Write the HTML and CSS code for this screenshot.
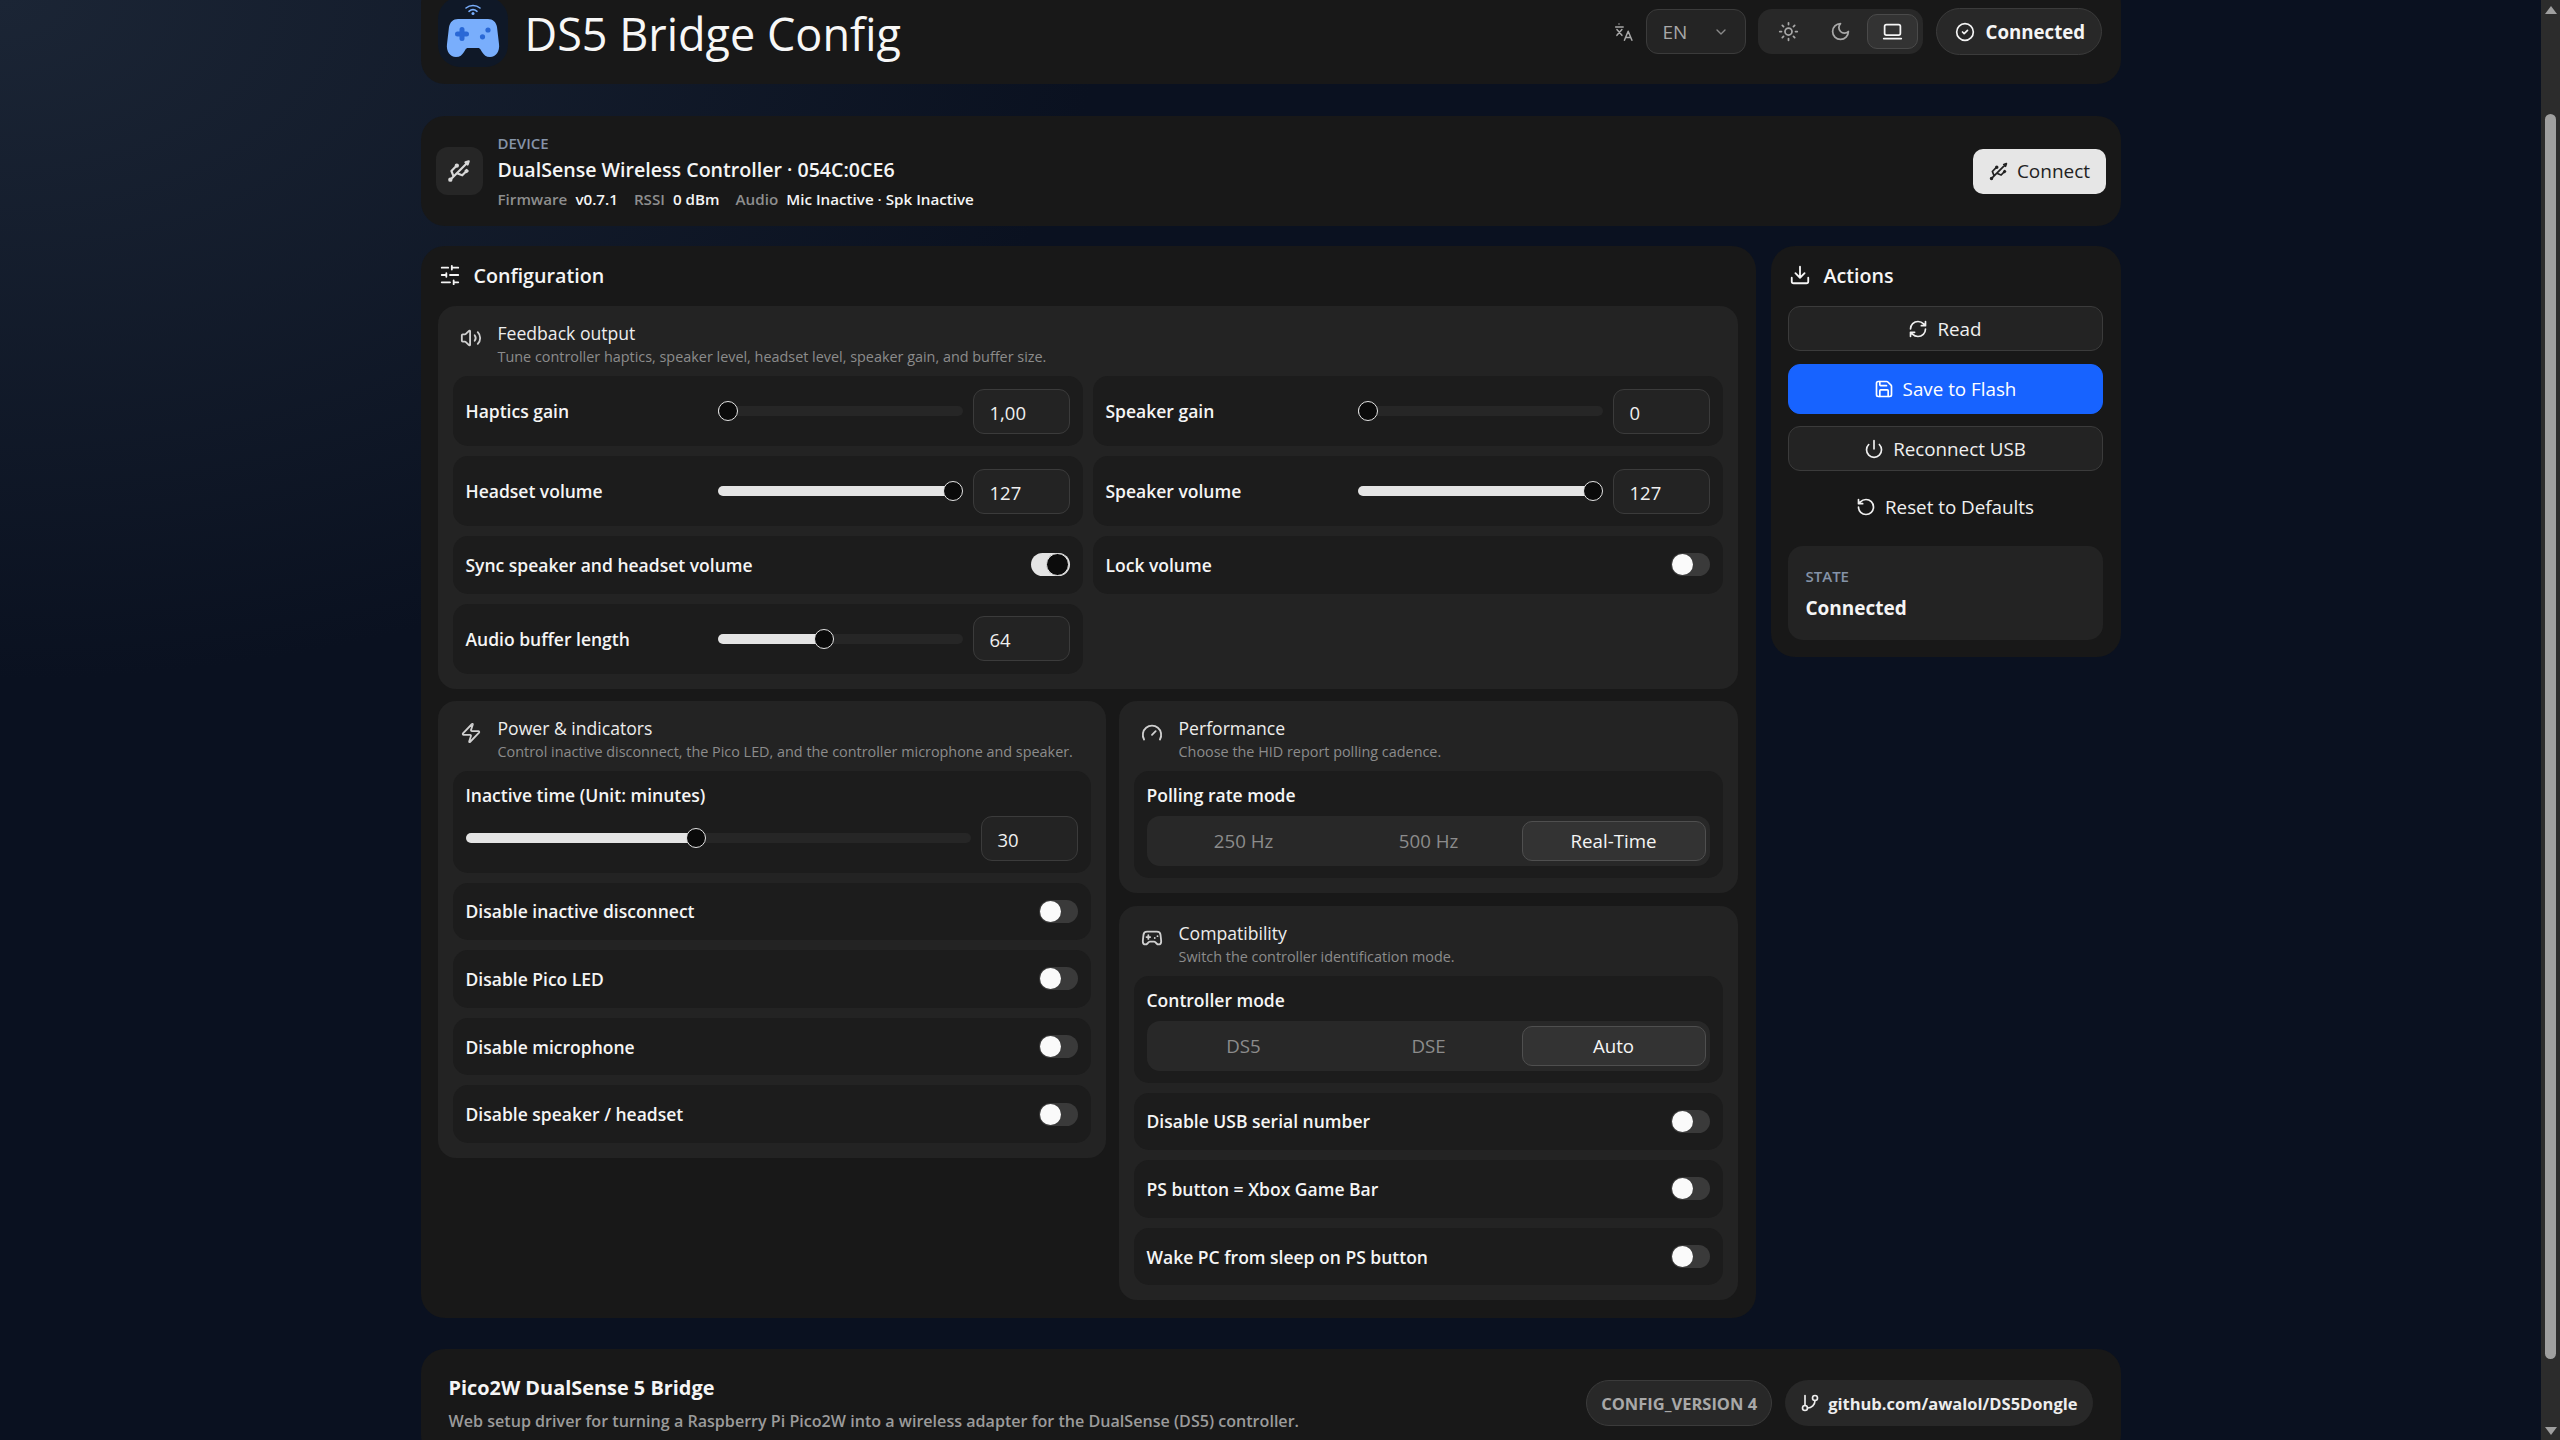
FILE: index.html
```html
<!DOCTYPE html>
<html lang="en">
<head>
    <meta charset="UTF-8">
    <meta name="viewport" content="width=device-width, initial-scale=1.0">
    <title>DS5 Bridge Config</title>
    <link rel="stylesheet" href="styles.css">
</head>
<body>
    <div class="app">
        <div class="scroll-area">
            <div class="page">
                <header class="card header">
                    <div class="logo">
                        <svg width="70" height="70" viewBox="0 0 70 70">
                            <path d="M28 11c4-3.400 10-3.400 14 0M31 14.300c2.400-2 5.600-2 8 0" fill="none" stroke="#79aefc" stroke-width="1.600" stroke-linecap="round"/>
                            <circle cx="35" cy="16.500" r="1.500" fill="#79aefc"/>
                            <path d="M20 22H50C55 22 58 25 59 30L61 47C62 54 58 60 52 60C48 60 46 58 44 55L42.500 52.500C42 51.500 41 51 40 51H30C29 51 28 51.500 27.500 52.500L26 55C24 58 22 60 18 60C12 60 8 54 9 47L11 30C12 25 15 22 20 22Z" fill="#79aefc"/>
                            <path d="M24 32.500v9M19.500 37h9" fill="none" stroke="#2a68d6" stroke-width="5" stroke-linecap="round"/>
                            <circle cx="50" cy="33" r="2.600" fill="#2a68d6"/>
                            <circle cx="44.500" cy="39.800" r="2.600" fill="#2a68d6"/>
                        </svg>
                    </div>
                    <h1 class="app-title">DS5 Bridge Config</h1>
                    <div class="header-tools">
                        <svg class="icon translate-icon" viewBox="0 0 24 24">
                            <path d="M6 2.500h.01M2 6h9M3.500 9l6 7M9.500 9l-6 7M12.500 22l4.500-11 4.500 11M14 18.500h6"/>
                        </svg>
                        <div class="lang-select">
                            <span>EN</span>
                            <svg class="icon chevron" viewBox="0 0 24 24"><path d="m6 9 6 6 6-6"/></svg>
                        </div>
                        <div class="theme-group">
                            <div class="theme-btn">
                                <svg class="icon" viewBox="0 0 24 24"><circle cx="12" cy="12" r="4"/><path d="M12 2v2M12 20v2m-7.070-17.070 1.410 1.410M17.660 17.660l1.410 1.410M2 12h2M20 12h2M6.340 17.660l-1.410 1.410M19.070 4.930l-1.410 1.410"/></svg>
                            </div>
                            <div class="theme-btn">
                                <svg class="icon" viewBox="0 0 24 24"><path d="M12 3a6 6 0 0 0 9 9 9 9 0 1 1-9-9Z"/></svg>
                            </div>
                            <div class="theme-btn active">
                                <svg class="icon" viewBox="0 0 24 24"><rect x="3" y="4" width="18" height="12" rx="2"/><path d="M2 20h20"/></svg>
                            </div>
                        </div>
                        <div class="status-pill">
                            <svg class="icon" viewBox="0 0 24 24"><circle cx="12" cy="12" r="10"/><path d="m9 12 2 2 4-4"/></svg>
                            <span>Connected</span>
                        </div>
                    </div>
                </header>

                <section class="card device">
                    <div class="device-icon">
                        <svg class="icon" viewBox="0 0 24 24"><circle cx="10" cy="7" r="1"/><circle cx="4" cy="20" r="1"/><path d="M4.700 19.300 19 5M21 3l-3 1 2 2ZM9.260 7.680 5 12l2 5M10 14l5 2 3.500-3.500M18 12l1-1 1 1-1 1Z"/></svg>
                    </div>
                    <div class="device-info">
                        <div class="eyebrow">DEVICE</div>
                        <div class="device-name">DualSense Wireless Controller · 054C:0CE6</div>
                        <div class="device-meta">
                            <span class="meta-item"><span class="meta-key">Firmware</span><span>v0.7.1</span></span>
                            <span class="meta-item"><span class="meta-key">RSSI</span><span>0 dBm</span></span>
                            <span class="meta-item"><span class="meta-key">Audio</span><span>Mic Inactive · Spk Inactive</span></span>
                        </div>
                    </div>
                    <button class="connect-btn">
                        <svg class="icon" viewBox="0 0 24 24"><circle cx="10" cy="7" r="1"/><circle cx="4" cy="20" r="1"/><path d="M4.700 19.300 19 5M21 3l-3 1 2 2ZM9.260 7.680 5 12l2 5M10 14l5 2 3.500-3.500M18 12l1-1 1 1-1 1Z"/></svg>
                        Connect
                    </button>
                </section>

                <div class="main-grid">
                    <section class="card config">
                        <h2 class="panel-title">
                            <svg class="icon" viewBox="0 0 24 24"><path d="M21 4h-7M10 4H3M21 12h-9M8 12H3M21 20h-5M12 20H3M14 2v4M8 10v4M16 18v4"/></svg>
                            Configuration
                        </h2>

                        <div class="section">
                            <div class="section-head">
                                <svg class="icon" viewBox="0 0 24 24"><path d="M11 4.702a.705.705 0 0 0-1.203-.498L6.413 7.587A1.400 1.400 0 0 1 5.416 8H3a1 1 0 0 0-1 1v6a1 1 0 0 0 1 1h2.416a1.400 1.400 0 0 1 .997.413l3.383 3.384A.705.705 0 0 0 11 19.298z"/><path d="M16 9a5 5 0 0 1 0 6M19.364 18.364a9 9 0 0 0 0-12.728"/></svg>
                                <div>
                                    <div class="section-title">Feedback output</div>
                                    <div class="section-desc">Tune controller haptics, speaker level, headset level, speaker gain, and buffer size.</div>
                                </div>
                            </div>
                            <div class="two-col">
                                <div class="row slider-row">
                                    <label>Haptics gain</label>
                                    <div class="slider" style="--v: 0"><div class="slider-fill"></div><div class="slider-thumb"></div></div>
                                    <div class="num-box">1,00</div>
                                </div>
                                <div class="row slider-row">
                                    <label>Speaker gain</label>
                                    <div class="slider" style="--v: 0"><div class="slider-fill"></div><div class="slider-thumb"></div></div>
                                    <div class="num-box">0</div>
                                </div>
                                <div class="row slider-row">
                                    <label>Headset volume</label>
                                    <div class="slider" style="--v: 1"><div class="slider-fill"></div><div class="slider-thumb"></div></div>
                                    <div class="num-box">127</div>
                                </div>
                                <div class="row slider-row">
                                    <label>Speaker volume</label>
                                    <div class="slider" style="--v: 1"><div class="slider-fill"></div><div class="slider-thumb"></div></div>
                                    <div class="num-box">127</div>
                                </div>
                                <div class="row toggle-row">
                                    <label>Sync speaker and headset volume</label>
                                    <div class="toggle on"></div>
                                </div>
                                <div class="row toggle-row">
                                    <label>Lock volume</label>
                                    <div class="toggle"></div>
                                </div>
                                <div class="row slider-row">
                                    <label>Audio buffer length</label>
                                    <div class="slider" style="--v: 0.43"><div class="slider-fill"></div><div class="slider-thumb"></div></div>
                                    <div class="num-box">64</div>
                                </div>
                            </div>
                        </div>

                        <div class="lower-grid">
                            <div class="section power">
                                <div class="section-head">
                                    <svg class="icon" viewBox="0 0 24 24"><path d="M4 14a1 1 0 0 1-.78-1.630l9.900-10.200a.5.5 0 0 1 .86.46l-1.920 6.020A1 1 0 0 0 13 10h7a1 1 0 0 1 .78 1.630l-9.900 10.200a.5.5 0 0 1-.86-.46l1.920-6.020A1 1 0 0 0 11 14z"/></svg>
                                    <div>
                                        <div class="section-title">Power &amp; indicators</div>
                                        <div class="section-desc">Control inactive disconnect, the Pico LED, and the controller microphone and speaker.</div>
                                    </div>
                                </div>
                                <div class="stack">
                                    <div class="row block-row">
                                        <label>Inactive time (Unit: minutes)</label>
                                        <div class="block-controls">
                                            <div class="slider" style="--v: 0.455"><div class="slider-fill"></div><div class="slider-thumb"></div></div>
                                            <div class="num-box">30</div>
                                        </div>
                                    </div>
                                    <div class="row toggle-row"><label>Disable inactive disconnect</label><div class="toggle"></div></div>
                                    <div class="row toggle-row"><label>Disable Pico LED</label><div class="toggle"></div></div>
                                    <div class="row toggle-row"><label>Disable microphone</label><div class="toggle"></div></div>
                                    <div class="row toggle-row"><label>Disable speaker / headset</label><div class="toggle"></div></div>
                                </div>
                            </div>

                            <div class="right-stack">
                                <div class="section">
                                    <div class="section-head">
                                        <svg class="icon" viewBox="0 0 24 24"><path d="m12 14 4-4M3.340 19a10 10 0 1 1 17.320 0"/></svg>
                                        <div>
                                            <div class="section-title">Performance</div>
                                            <div class="section-desc">Choose the HID report polling cadence.</div>
                                        </div>
                                    </div>
                                    <div class="row segment-row">
                                        <label>Polling rate mode</label>
                                        <div class="segment">
                                            <div class="segment-btn">250 Hz</div>
                                            <div class="segment-btn">500 Hz</div>
                                            <div class="segment-btn active">Real-Time</div>
                                        </div>
                                    </div>
                                </div>

                                <div class="section">
                                    <div class="section-head">
                                        <svg class="icon" viewBox="0 0 24 24"><path d="M6 11h4M8 9v4M15 12h.01M18 10h.01"/><path d="M17.320 5H6.680a4 4 0 0 0-3.978 3.590c-.006.052-.01.101-.017.152C2.604 9.416 2 14.456 2 16a3 3 0 0 0 3 3c1 0 1.500-.5 2-1l1.414-1.414A2 2 0 0 1 9.828 16h4.344a2 2 0 0 1 1.414.586L17 18c.5.5 1 1 2 1a3 3 0 0 0 3-3c0-1.545-.604-6.584-.685-7.258-.007-.05-.011-.1-.017-.151A4 4 0 0 0 17.320 5z"/></svg>
                                        <div>
                                            <div class="section-title">Compatibility</div>
                                            <div class="section-desc">Switch the controller identification mode.</div>
                                        </div>
                                    </div>
                                    <div class="stack">
                                        <div class="row segment-row">
                                            <label>Controller mode</label>
                                            <div class="segment">
                                                <div class="segment-btn">DS5</div>
                                                <div class="segment-btn">DSE</div>
                                                <div class="segment-btn active">Auto</div>
                                            </div>
                                        </div>
                                        <div class="row toggle-row"><label>Disable USB serial number</label><div class="toggle"></div></div>
                                        <div class="row toggle-row"><label>PS button = Xbox Game Bar</label><div class="toggle"></div></div>
                                        <div class="row toggle-row"><label>Wake PC from sleep on PS button</label><div class="toggle"></div></div>
                                    </div>
                                </div>
                            </div>
                        </div>
                    </section>

                    <aside class="card actions">
                        <h2 class="panel-title">
                            <svg class="icon" viewBox="0 0 24 24"><path d="M12 15V3M21 15v4a2 2 0 0 1-2 2H5a2 2 0 0 1-2-2v-4M7 10l5 5 5-5"/></svg>
                            Actions
                        </h2>
                        <div class="action-list">
                            <button class="action-btn">
                                <svg class="icon" viewBox="0 0 24 24"><path d="M3 12a9 9 0 0 1 9-9 9.750 9.750 0 0 1 6.740 2.740L21 8M21 3v5h-5M21 12a9 9 0 0 1-9 9 9.750 9.750 0 0 1-6.740-2.740L3 16M8 16H3v5"/></svg>
                                Read
                            </button>
                            <button class="action-btn primary">
                                <svg class="icon" viewBox="0 0 24 24"><path d="M15.200 3a2 2 0 0 1 1.400.6l3.800 3.800a2 2 0 0 1 .6 1.400V19a2 2 0 0 1-2 2H5a2 2 0 0 1-2-2V5a2 2 0 0 1 2-2z"/><path d="M17 21v-7a1 1 0 0 0-1-1H8a1 1 0 0 0-1 1v7M7 3v4a1 1 0 0 0 1 1h7"/></svg>
                                Save to Flash
                            </button>
                            <button class="action-btn">
                                <svg class="icon" viewBox="0 0 24 24"><path d="M12 2v10M18.400 6.600a9 9 0 1 1-12.770.04"/></svg>
                                Reconnect USB
                            </button>
                            <button class="action-btn ghost">
                                <svg class="icon" viewBox="0 0 24 24"><path d="M3 12a9 9 0 1 0 9-9 9.750 9.750 0 0 0-6.740 2.740L3 8M3 3v5h5"/></svg>
                                Reset to Defaults
                            </button>
                        </div>
                        <div class="state-box">
                            <div class="eyebrow">STATE</div>
                            <div class="state-value">Connected</div>
                        </div>
                    </aside>
                </div>

                <footer class="card footer">
                    <div class="footer-text">
                        <div class="footer-title">Pico2W DualSense 5 Bridge</div>
                        <div class="footer-desc">Web setup driver for turning a Raspberry Pi Pico2W into a wireless adapter for the DualSense (DS5) controller.</div>
                    </div>
                    <div class="footer-pills">
                        <div class="pill version-pill">CONFIG_VERSION 4</div>
                        <div class="pill repo-pill">
                            <svg class="icon" viewBox="0 0 24 24"><path d="M6 3v12M18 9a9 9 0 0 1-9 9"/><circle cx="18" cy="6" r="3"/><circle cx="6" cy="18" r="3"/></svg>
                            github.com/awalol/DS5Dongle
                        </div>
                    </div>
                </footer>
            </div>
        </div>

        <div class="scrollbar">
            <div class="scroll-arrow up"></div>
            <div class="scroll-track"><div class="scroll-thumb"></div></div>
            <div class="scroll-arrow down"></div>
        </div>
    </div>
</body>
</html>
```

FILE: styles.css
```css
* {
    margin: 0;
    padding: 0;
    box-sizing: border-box;
}

html, body {
    height: 100%;
    overflow: hidden;
}

body {
    background-color: #0a1120;
    background-image: radial-gradient(ellipse 1100px 680px at 0 0, #1b2535 0, #0a1120 100%);
    color: #f5f5f5;
    font-family: "Open Sans", "Noto Sans", sans-serif;
}

.app {
    display: flex;
    height: 100vh;
}

.scroll-area {
    flex: 1;
    overflow: hidden;
}

.page {
    width: 1700px;
    margin: -20px auto 0;
}

.card {
    background-color: #181818;
    border-radius: 24px;
}

.icon {
    width: 20px;
    height: 20px;
    flex-shrink: 0;
    fill: none;
    stroke: currentColor;
    stroke-width: 2;
    stroke-linecap: round;
    stroke-linejoin: round;
}

/* header */
.header {
    display: flex;
    align-items: center;
    padding: 17px 19px 17px 17px;
    margin-bottom: 32px;
}

.logo {
    width: 70px;
    height: 70px;
    border-radius: 22px;
    background-color: #0f1827;
    margin-right: 17px;
}

.app-title {
    font-size: 45px;
    font-weight: 400;
    line-height: 60px;
    color: #f7f7f7;
    margin-top: 4px;
}

.header-tools {
    display: flex;
    align-items: center;
    margin-left: auto;
    margin-top: -1px;
}

.translate-icon {
    color: #a8a8a8;
    margin-right: 12px;
    stroke-width: 1.8;
}

.lang-select {
    display: flex;
    align-items: center;
    justify-content: space-between;
    width: 100px;
    height: 45px;
    padding: 0 16px;
    margin-right: 12px;
    background-color: #242424;
    border: 1px solid #3b3b3b;
    border-radius: 12px;
    color: #a8a8a8;
    font-size: 19px;
}

.chevron {
    width: 16px;
    height: 16px;
    color: #8a8a8a;
}

.theme-group {
    display: flex;
    width: 165px;
    height: 45px;
    padding: 5px 4px 5px 5px;
    margin-right: 13px;
    background-color: #282828;
    border-radius: 14px;
}

.theme-btn {
    display: flex;
    align-items: center;
    justify-content: center;
    width: 52px;
    height: 35px;
    border: 1px solid transparent;
    border-radius: 10px;
    color: #a8a8a8;
}

.theme-btn .icon {
    width: 21px;
    height: 21px;
}

.theme-group .theme-btn + .theme-btn {
    margin-left: 1px;
}

.theme-btn.active {
    background-color: #333333;
    border-color: #4a4a4a;
    color: #f5f5f5;
}

.status-pill {
    display: flex;
    align-items: center;
    gap: 11px;
    width: 166px;
    height: 47px;
    padding-left: 18px;
    background-color: #282828;
    border: 1px solid #3b3b3b;
    border-radius: 24px;
    font-size: 18.7px;
    font-weight: 700;
}

/* device */
.device {
    display: flex;
    align-items: center;
    height: 110px;
    padding: 0 15px;
    margin-bottom: 20px;
}

.device-icon {
    display: flex;
    align-items: center;
    justify-content: center;
    width: 47px;
    height: 48px;
    margin-right: 15px;
    background-color: #262626;
    border-radius: 12px;
    color: #d8d8d8;
}

.device-icon .icon {
    width: 26px;
    height: 26px;
}

.device-info {
    margin-top: 4px;
}

.eyebrow {
    font-size: 15px;
    font-weight: 600;
    line-height: 20px;
    color: #8593a8;
}

.device-name {
    margin-top: 2px;
    font-size: 19.6px;
    font-weight: 600;
    line-height: 30px;
}

.device-meta {
    display: flex;
    gap: 16px;
    font-size: 15.2px;
    font-weight: 600;
    line-height: 28px;
}

.meta-item {
    display: flex;
    gap: 8px;
}

.meta-key {
    color: #8e8e8e;
}

.connect-btn {
    display: flex;
    align-items: center;
    justify-content: center;
    gap: 8px;
    width: 133px;
    height: 45px;
    margin-left: auto;
    background-color: #e6e6e6;
    border: none;
    border-radius: 10px;
    color: #222222;
    font-family: inherit;
    font-size: 19px;
}

.connect-btn .icon {
    width: 21px;
    height: 21px;
}

/* main layout */
.main-grid {
    display: grid;
    grid-template-columns: 1335px 350px;
    gap: 15px;
    align-items: start;
    margin-bottom: 31px;
}

.config {
    padding: 0 18px 18px 17px;
}

.panel-title {
    display: flex;
    align-items: center;
    gap: 13px;
    height: 60px;
    padding-left: 1px;
    padding-bottom: 2px;
    font-size: 19.7px;
    font-weight: 600;
}

.panel-title .icon {
    width: 22px;
    height: 22px;
}

.section {
    background-color: #232323;
    border-radius: 18px;
    padding: 15px;
}

.section-head {
    display: flex;
    align-items: flex-start;
    gap: 16px;
    height: 55px;
    padding-left: 7px;
}

.section-head .icon {
    width: 22px;
    height: 22px;
    margin-top: 6px;
    color: #d0d0d0;
}

.section-title {
    font-size: 17.6px;
    line-height: 24px;
    color: #ededed;
}

.section-desc {
    font-size: 14.4px;
    line-height: 24px;
    color: #8c8c8c;
}

.two-col {
    display: grid;
    grid-template-columns: 630px 630px;
    gap: 10px;
}

.row {
    background-color: #1c1c1c;
    border-radius: 15px;
    padding: 0 13px;
}

.row label {
    font-size: 17.5px;
    font-weight: 600;
    color: #f5f5f5;
}

.slider-row {
    display: grid;
    grid-template-columns: 242px 1fr 97px;
    gap: 10px;
    align-items: center;
    height: 70px;
}

.toggle-row {
    display: flex;
    align-items: center;
    justify-content: space-between;
    height: 57.6px;
}

.slider {
    position: relative;
    height: 10px;
    background-color: #262626;
    border-radius: 5px;
}

.slider-fill {
    width: calc((100% - 20px) * var(--v) + 10px);
    height: 100%;
    background-color: #e4e4e4;
    border-radius: 5px;
}

.slider-thumb {
    position: absolute;
    top: -5px;
    left: calc((100% - 20px) * var(--v));
    width: 20px;
    height: 20px;
    background-color: #0a0a0a;
    border: 1.5px solid #e4e4e4;
    border-radius: 50%;
}

.num-box {
    display: flex;
    align-items: center;
    width: 97px;
    height: 45px;
    padding: 2px 16px 0;
    background-color: #232323;
    border: 1px solid #3b3b3b;
    border-radius: 11px;
    font-size: 18.5px;
    color: #f0f0f0;
}

.toggle {
    display: flex;
    align-items: center;
    width: 39px;
    height: 23px;
    padding: 1px;
    background-color: #3a3a3a;
    border-radius: 12px;
}

.toggle::after {
    content: "";
    width: 21px;
    height: 21px;
    background-color: #fafafa;
    border-radius: 50%;
}

.toggle.on {
    justify-content: flex-end;
    background-color: #e4e4e4;
}

.toggle.on::after {
    background-color: #0c0c0c;
    border: 1px solid #e4e4e4;
}

.lower-grid {
    display: grid;
    grid-template-columns: 668px 619px;
    gap: 13px;
    align-items: start;
    margin-top: 12px;
}

.stack {
    display: flex;
    flex-direction: column;
    gap: 10px;
}

.block-row {
    height: 102px;
    padding-top: 12px;
}

.block-row label {
    display: block;
    line-height: 24px;
}

.block-controls {
    display: grid;
    grid-template-columns: 1fr 97px;
    gap: 10px;
    align-items: center;
    margin-top: 9px;
}

.right-stack {
    display: flex;
    flex-direction: column;
    gap: 13px;
}

.segment-row {
    height: 107px;
    padding-top: 12px;
}

.segment-row label {
    display: block;
    line-height: 24px;
}

.segment {
    display: grid;
    grid-template-columns: repeat(3, 1fr);
    gap: 1px;
    height: 50px;
    padding: 5px 4px 5px 5px;
    margin-top: 9px;
    background-color: #282828;
    border-radius: 13px;
}

.segment-btn {
    display: flex;
    align-items: center;
    justify-content: center;
    border: 1px solid transparent;
    border-radius: 10px;
    font-size: 18.7px;
    color: #8c8c8c;
}

.segment-btn.active {
    background-color: #333333;
    border-color: #4f4f4f;
    color: #f5f5f5;
}

/* actions */
.actions {
    padding: 0 18px 17px 17px;
}

.action-list {
    display: flex;
    flex-direction: column;
    gap: 12px;
}

.action-btn {
    display: flex;
    align-items: center;
    justify-content: center;
    gap: 9px;
    height: 45px;
    background-color: #232323;
    border: 1px solid #3b3b3b;
    border-radius: 12px;
    color: #f0f0f0;
    font-family: inherit;
    font-size: 18.8px;
}

.action-btn .icon {
    width: 20px;
    height: 20px;
}

.action-btn.primary {
    height: 50px;
    margin-top: 1px;
    background-color: #1763ff;
    border-color: #1763ff;
    color: #ffffff;
}

.action-btn.ghost {
    height: 50px;
    padding-bottom: 2px;
    background: none;
    border: none;
}

.state-box {
    height: 94px;
    padding: 20px 18px 0;
    margin-top: 13px;
    background-color: #232323;
    border-radius: 15px;
}

.state-value {
    margin-top: 9px;
    font-size: 19px;
    font-weight: 700;
    line-height: 26px;
}

/* footer */
.footer {
    display: flex;
    align-items: center;
    justify-content: space-between;
    padding: 27px 28px 26px 28px;
}

.footer-title {
    font-size: 19.9px;
    font-weight: 700;
    line-height: 24px;
}

.footer-desc {
    margin-top: 9px;
    font-size: 16.1px;
    font-weight: 600;
    line-height: 24px;
    color: #9b9b9b;
}

.footer-pills {
    display: flex;
    align-items: center;
    gap: 13px;
    margin-top: -3px;
}

.pill {
    display: flex;
    align-items: center;
    height: 46px;
    border-radius: 23px;
    font-size: 16.5px;
    font-weight: 700;
}

.version-pill {
    padding: 0 14px;
    background-color: #282828;
    border: 1px solid #3b3b3b;
    color: #a8a8a8;
}

.repo-pill {
    gap: 8px;
    padding: 0 15px;
    background-color: #282828;
    color: #ededed;
}

.repo-pill .icon {
    width: 20px;
    height: 20px;
}

/* window scrollbar */
.scrollbar {
    display: flex;
    flex-direction: column;
    width: 19px;
    background-color: #2c2c2c;
}

.scroll-arrow {
    height: 19px;
    flex-shrink: 0;
    display: flex;
    align-items: center;
    justify-content: center;
}

.scroll-arrow::after {
    content: "";
    border-left: 6px solid transparent;
    border-right: 6px solid transparent;
}

.scroll-arrow.up::after {
    border-bottom: 8px solid #9f9f9f;
}

.scroll-arrow.down::after {
    border-top: 8px solid #9f9f9f;
}

.scroll-track {
    flex: 1;
    display: flex;
    justify-content: center;
    padding-top: 95px;
}

.scroll-thumb {
    width: 11px;
    height: 1245px;
    background-color: #9f9f9f;
    border-radius: 6px;
}
```
